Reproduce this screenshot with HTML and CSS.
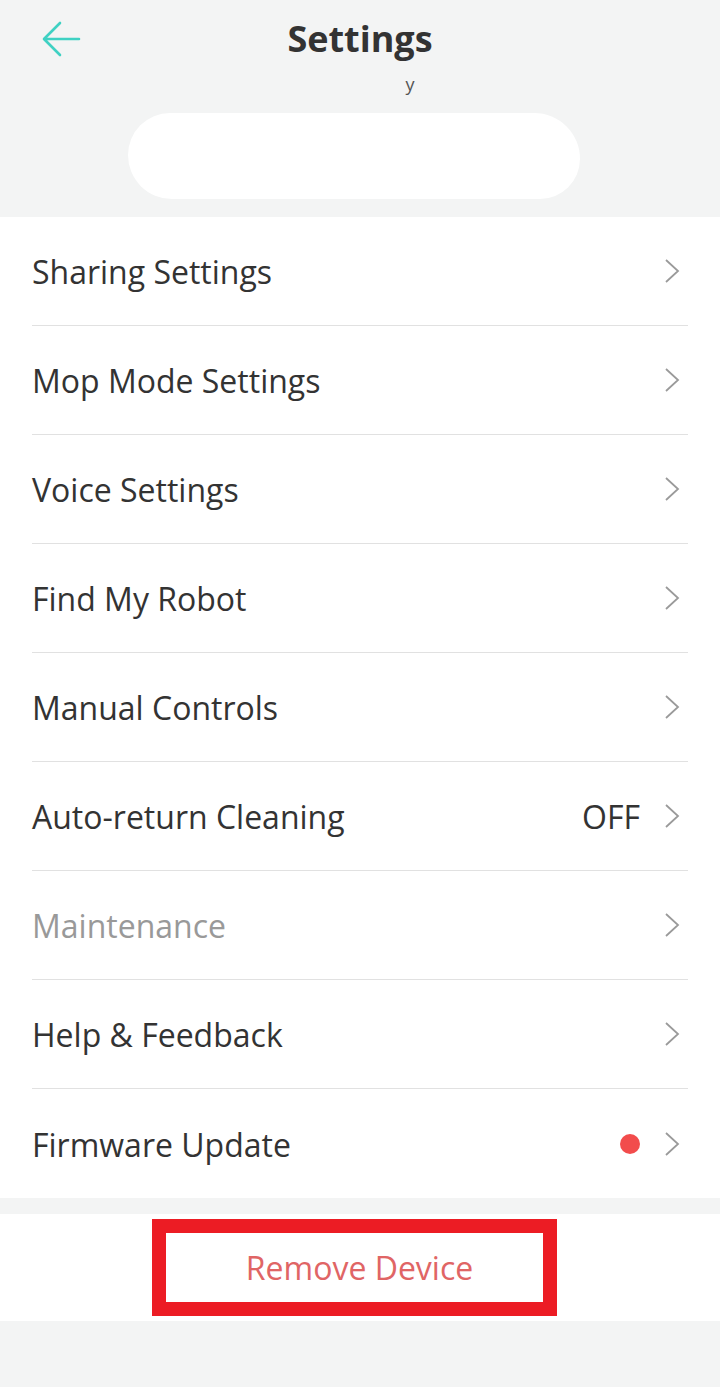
FILE: index.html
```html
<!DOCTYPE html>
<html>
<head>
<meta charset="utf-8">
<link rel="stylesheet" href="styles.css">
</head>
<body>
<div class="page">
  <header class="top">
    <div class="nav">
      <svg class="back" width="40" height="36" viewBox="0 0 40 36"><path d="M38 18H4M19 2L3 18l16 16" fill="none" stroke="#3fd1c3" stroke-width="2.6" stroke-linecap="round" stroke-linejoin="round"/></svg>
      <h1 class="title">Settings</h1>
    </div>
    <div class="sub"><span class="hidden-text">y</span></div>
    <div class="blob"></div>
  </header>
  <ul class="list">
    <li class="row"><span class="label">Sharing Settings</span><span class="right"><svg class="chev" viewBox="0 0 16 26"><path d="M2 2l12 11L2 24" fill="none" stroke="#9a9a9a" stroke-width="1.8"/></svg></span></li>
    <li class="row"><span class="label">Mop Mode Settings</span><span class="right"><svg class="chev" viewBox="0 0 16 26"><path d="M2 2l12 11L2 24" fill="none" stroke="#9a9a9a" stroke-width="1.8"/></svg></span></li>
    <li class="row"><span class="label">Voice Settings</span><span class="right"><svg class="chev" viewBox="0 0 16 26"><path d="M2 2l12 11L2 24" fill="none" stroke="#9a9a9a" stroke-width="1.8"/></svg></span></li>
    <li class="row"><span class="label">Find My Robot</span><span class="right"><svg class="chev" viewBox="0 0 16 26"><path d="M2 2l12 11L2 24" fill="none" stroke="#9a9a9a" stroke-width="1.8"/></svg></span></li>
    <li class="row"><span class="label">Manual Controls</span><span class="right"><svg class="chev" viewBox="0 0 16 26"><path d="M2 2l12 11L2 24" fill="none" stroke="#9a9a9a" stroke-width="1.8"/></svg></span></li>
    <li class="row"><span class="label">Auto-return Cleaning</span><span class="right"><span class="value">OFF</span><svg class="chev" viewBox="0 0 16 26"><path d="M2 2l12 11L2 24" fill="none" stroke="#9a9a9a" stroke-width="1.8"/></svg></span></li>
    <li class="row"><span class="label muted">Maintenance</span><span class="right"><svg class="chev" viewBox="0 0 16 26"><path d="M2 2l12 11L2 24" fill="none" stroke="#9a9a9a" stroke-width="1.8"/></svg></span></li>
    <li class="row"><span class="label">Help &amp; Feedback</span><span class="right"><svg class="chev" viewBox="0 0 16 26"><path d="M2 2l12 11L2 24" fill="none" stroke="#9a9a9a" stroke-width="1.8"/></svg></span></li>
    <li class="row"><span class="label">Firmware Update</span><span class="right"><span class="dot"></span><svg class="chev" viewBox="0 0 16 26"><path d="M2 2l12 11L2 24" fill="none" stroke="#9a9a9a" stroke-width="1.8"/></svg></span></li>
  </ul>
  <div class="remove-band">
    <div class="remove-btn">Remove Device</div>
  </div>
</div>
</body>
</html>
```
FILE: styles.css
```css
* { box-sizing: border-box; }
html, body { margin: 0; padding: 0; }
body {
  background: #f3f4f4;
  font-family: "Open Sans", "Noto Sans", sans-serif;
  color: #333;
  width: 720px;
  height: 1387px;
  overflow: hidden;
}
.top {
  height: 217px;
}
.nav {
  height: 80px;
  display: flex;
  align-items: center;
  justify-content: center;
  position: relative;
}
.back {
  position: absolute;
  left: 41px;
  top: 21px;
}
.title {
  margin: 0;
  font-size: 36px;
  font-weight: 700;
  color: #333;
  line-height: 1;
  margin-top: -3px;
}
.sub {
  height: 30px;
  display: flex;
  justify-content: center;
}
.hidden-text {
  margin-left: 100px;
  margin-top: -8px;
  font-size: 18px;
  line-height: 24px;
  color: #555;
}
.blob {
  margin: 3px 0 0 128px;
  width: 452px;
  height: 86px;
  background: #fff;
  border-radius: 44px 48px 42px 46px;
}
.list {
  list-style: none;
  margin: 0;
  padding: 0 32px;
  background: #fff;
}
.row {
  height: 109px;
  display: flex;
  align-items: center;
  justify-content: space-between;
  border-bottom: 1px solid #e1e1e1;
}
.row:last-child { border-bottom: none; }
.label {
  font-size: 32px;
  color: #333;
  padding-top: 1px;
}
.label.muted { color: #999; }
.right {
  display: flex;
  align-items: center;
  gap: 24px;
  padding-right: 8px;
}
.value {
  font-size: 32px;
  color: #333;
  padding-top: 1px;
}
.chev {
  width: 16px;
  height: 26px;
  display: block;
}
.dot {
  width: 20px;
  height: 20px;
  border-radius: 50%;
  background: #f24c4c;
}
.remove-band {
  margin-top: 16px;
  height: 107px;
  background: #fff;
  display: flex;
  justify-content: center;
  align-items: center;
}
.remove-btn {
  width: 405px;
  height: 97px;
  border: 14px solid #ec1c24;
  display: flex;
  align-items: center;
  justify-content: center;
  font-size: 32px;
  color: #e06565;
  margin-left: -11px;
  padding-left: 10px;
}
```
